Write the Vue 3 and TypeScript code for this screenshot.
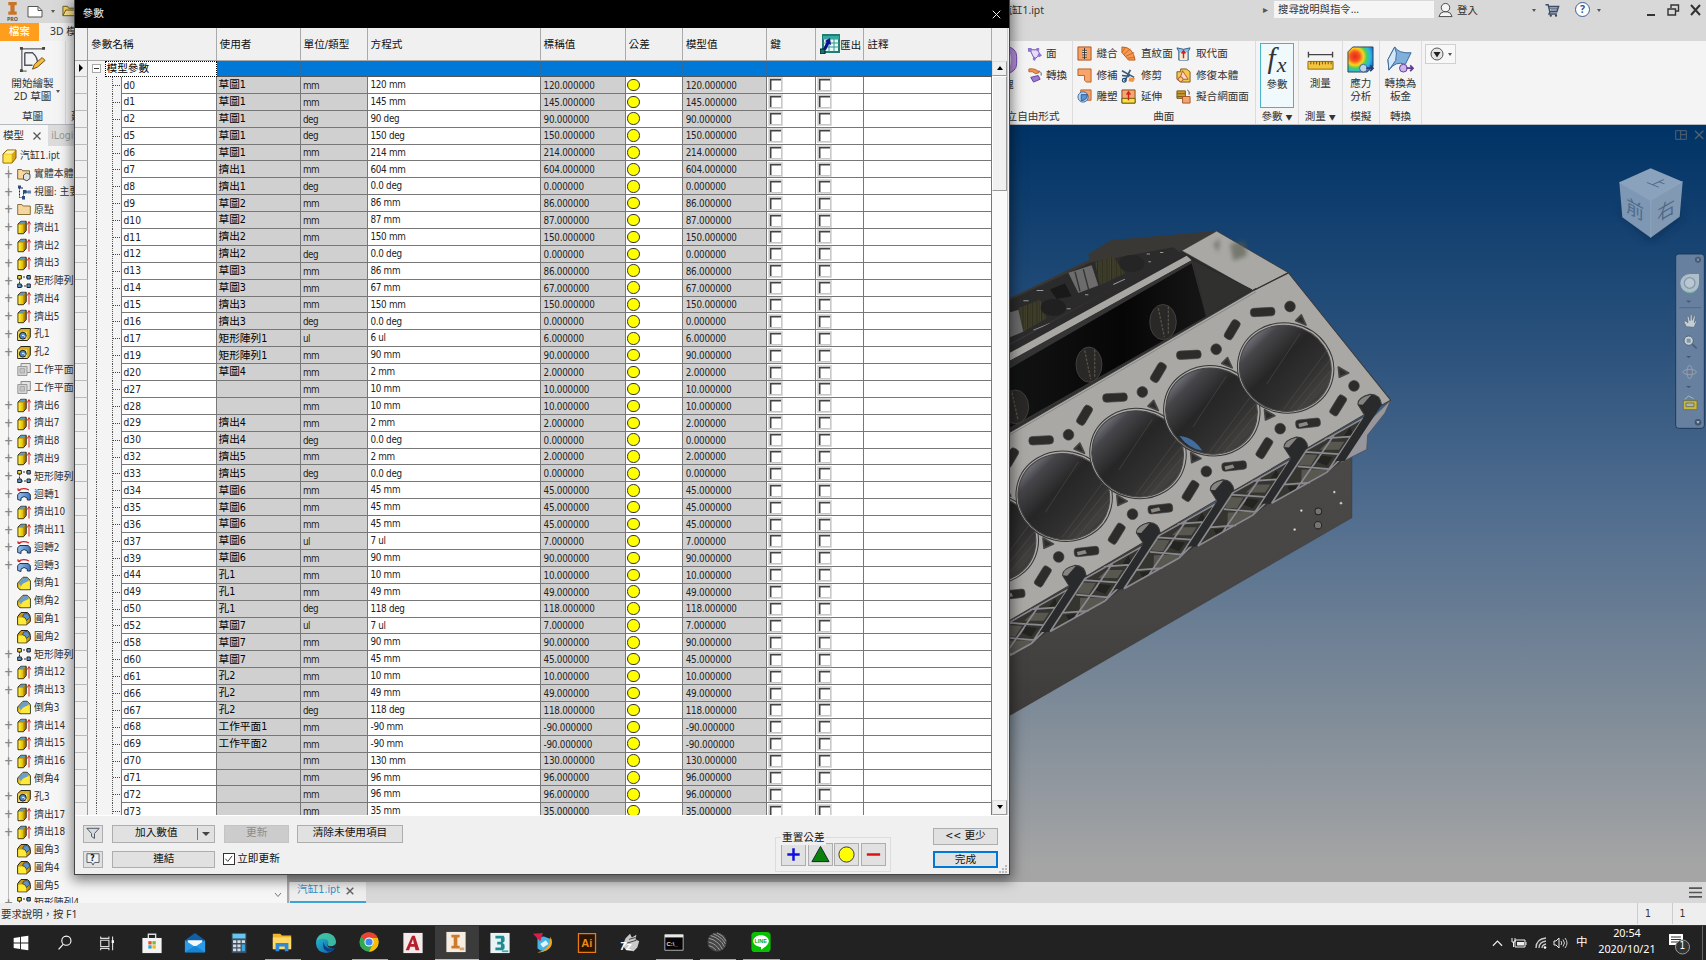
<script setup lang="ts">
interface Param { name: string; user: string; eq: string; unit: string; value: string }

const source = `d0|草圖1|120 mm
d1|草圖1|145 mm
d2|草圖1|90 deg
d5|草圖1|150 deg
d6|草圖1|214 mm
d7|擠出1|604 mm
d8|擠出1|0.0 deg
d9|草圖2|86 mm
d10|草圖2|87 mm
d11|擠出2|150 mm
d12|擠出2|0.0 deg
d13|草圖3|86 mm
d14|草圖3|67 mm
d15|擠出3|150 mm
d16|擠出3|0.0 deg
d17|矩形陣列1|6 ul
d19|矩形陣列1|90 mm
d20|草圖4|2 mm
d27||10 mm
d28||10 mm
d29|擠出4|2 mm
d30|擠出4|0.0 deg
d32|擠出5|2 mm
d33|擠出5|0.0 deg
d34|草圖6|45 mm
d35|草圖6|45 mm
d36|草圖6|45 mm
d37|草圖6|7 ul
d39|草圖6|90 mm
d44|孔1|10 mm
d49|孔1|49 mm
d50|孔1|118 deg
d52|草圖7|7 ul
d58|草圖7|90 mm
d60|草圖7|45 mm
d61|孔2|10 mm
d66|孔2|49 mm
d67|孔2|118 deg
d68|工作平面1|-90 mm
d69|工作平面2|-90 mm
d70||130 mm
d71||96 mm
d72||96 mm
d73||35 mm`

const params: Param[] = source.split('\n').map((line) => {
  const [name, user, eq] = line.split('|')
  const [num, unit] = eq.split(' ')
  return { name, user, eq, unit, value: Number(num).toFixed(6) }
})

const headers = ['參數名稱', '使用者', '單位/類型', '方程式', '標稱值', '公差', '模型值', '鍵', '匯出', '註釋']

interface Node { icon: string; label: string; plus: boolean }
const expandable = ['solid', 'view', 'folder', 'extrude', 'pattern', 'hole', 'revolve']
const nodes: Node[] = [
  'solid:實體本體(1)', 'view:視圖: 主要', 'folder:原點', 'extrude:擠出1', 'extrude:擠出2', 'extrude:擠出3',
  'pattern:矩形陣列1', 'extrude:擠出4', 'extrude:擠出5', 'hole:孔1', 'hole:孔2', 'plane:工作平面1', 'plane:工作平面2',
  'extrude:擠出6', 'extrude:擠出7', 'extrude:擠出8', 'extrude:擠出9', 'pattern:矩形陣列2', 'revolve:迴轉1',
  'extrude:擠出10', 'extrude:擠出11', 'revolve:迴轉2', 'revolve:迴轉3', 'chamfer:倒角1', 'chamfer:倒角2',
  'fillet:圓角1', 'fillet:圓角2', 'pattern:矩形陣列3', 'extrude:擠出12', 'extrude:擠出13', 'chamfer:倒角3',
  'extrude:擠出14', 'extrude:擠出15', 'extrude:擠出16', 'chamfer:倒角4', 'hole:孔3', 'extrude:擠出17',
  'extrude:擠出18', 'fillet:圓角3', 'fillet:圓角4', 'fillet:圓角5', 'pattern:矩形陣列4',
].map((s) => {
  const at = s.indexOf(':')
  const icon = s.slice(0, at)
  return { icon, label: s.slice(at + 1), plus: expandable.includes(icon) }
})

const surface = [
  [['stitch', '縫合'], ['ruled', '直紋面'], ['replace', '取代面']],
  [['patch', '修補'], ['trim', '修剪'], ['repair', '修復本體']],
  [['sculpt', '雕塑'], ['extend', '延伸'], ['mesh', '擬合網面面']],
]

const apps = [
  ['win', ''], ['search', ''], ['tasks', ''], ['store', ''], ['mail', ''], ['calc', ''], ['explorer', 'run'], ['edge', ''],
  ['chrome', 'run'], ['acad', ''], ['inventor', 'run active'], ['max', ''], ['bird', ''], ['ai', ''], ['zip', ''],
  ['cmd', 'run'], ['sphere', 'run'], ['line', 'run'],
]

const bays = [5, 4, 3, 2, 1, 0]
const shift = (k: number) => `translate(${-221.5 * k} ${126.5 * k})`
</script>

<template>
  <div class="app">
    <svg class="defs" width="0" height="0">
      <defs>
        <linearGradient id="gy" x1="0" x2="1"><stop offset="0" stop-color="#fff23a" /><stop offset="1" stop-color="#e0b400" /></linearGradient>
        <linearGradient id="gb" x1="0" x2="1"><stop offset="0" stop-color="#9cc0ee" /><stop offset="1" stop-color="#3f78bd" /></linearGradient>
        <linearGradient id="gedge" x1="0" y1="0" x2="1" y2="1"><stop offset="0" stop-color="#2bc3d2" /><stop offset="1" stop-color="#0b57ad" /></linearGradient>
        <radialGradient id="gstress" cx=".28" cy=".38" r=".85">
          <stop offset="0" stop-color="#e8281c" /><stop offset=".22" stop-color="#f5541e" /><stop offset=".4" stop-color="#ffd21e" />
          <stop offset=".55" stop-color="#4bd05a" /><stop offset=".72" stop-color="#27b8e8" /><stop offset="1" stop-color="#1d4fd0" />
        </radialGradient>
      </defs>
      <symbol id="solid" viewBox="0 0 14 14"><path d="M.7 11.500V2h4l1 1.300h6.800v8.200z" fill="#f7d9a0" stroke="#7b6236" /><path d="M6.500 7.500l3-2 3.500 1.500v4l-3 2.300-3.500-1.500z" fill="#dfe3e8" stroke="#555" /></symbol>
      <symbol id="view" viewBox="0 0 14 14"><path d="M2.500 2v10h3M4 2.500h3M6.500 7v4M9 6.500h5" stroke="#222" fill="none" stroke-dasharray="2 1" /><path d="M1 0h3v3H1zM6 4.500h3.500V8H6zM5 10.500h3V14H5z" fill="#2b4a80" /><path d="M10.500 5h3.500v3h-3.500z" fill="#5b83b8" /></symbol>
      <symbol id="folder" viewBox="0 0 14 14"><path d="M.7 12V2h4.200l1.200 1.500h7.200V12z" fill="#f4d79c" stroke="#8b6f3d" /></symbol>
      <symbol id="extrude" viewBox="0 0 14 14"><path d="M1 3.500L4 .8h5.200V10l-2.700 3.200H1z" fill="#a98400" stroke="#2a2613" /><path d="M1.500 4h5v8.700h-5z" fill="url(#gy)" /><path d="M1.600 3.300L4.200 1h4.300L6.600 3.300z" fill="#5b9bd5" /><path d="M12 13V2M10.300 4L12 1l1.700 3" stroke="#d32222" fill="none" /></symbol>
      <symbol id="pattern" viewBox="0 0 14 14"><path d="M3 2.500h8M2.500 4v7M4 11.500h7" stroke="#333" stroke-dasharray="2 1" fill="none" /><path d="M.7 1h3.600v3.500H.7z" fill="#f7e12f" stroke="#222" /><path d="M10 1h3.300v3.500H10zM.7 9.500h3.600V13H.7zM10 9.500h3.300V13H10z" fill="#5b9bd5" stroke="#222" /></symbol>
      <symbol id="hole" viewBox="0 0 14 14"><path d="M.7 4L4 1h9.300v8.500L10.500 13H.7z" fill="#d8b019" stroke="#2a2613" /><path d="M1.200 4.200h9v8.300h-9z" fill="#f6e36b" /><circle cx="5.800" cy="8.200" r="3.400" fill="#4f86c4" stroke="#222" /><path d="M5 8a2 2 0 0 1 3 2" stroke="#fff" fill="none" /></symbol>
      <symbol id="plane" viewBox="0 0 14 14"><path d="M4 1h9.300v9H4z" fill="#e4e4e4" stroke="#8a8a8a" /><path d="M.8 4H10v9H.8z" fill="#d4d4d4" stroke="#999" /><path d="M3 6h4.500v4.500H3z" fill="#c4c4c4" stroke="#aaa" /></symbol>
      <symbol id="revolve" viewBox="0 0 14 14"><path d="M1 3Q6-.5 12 2.500M1 3V.8M1 3h2.500" stroke="#d32222" fill="none" stroke-width="1.200" /><path d="M.7 7L3 5h8l2.300 2v5.500h-3V10.500Q7 7.500 4 10.500v2.500L.7 12z" fill="url(#gb)" stroke="#1d3452" /></symbol>
      <symbol id="chamfer" viewBox="0 0 14 14"><path d="M.7 6.500L6 .8h4L13.300 4v9.200H3L.7 11z" fill="#f2cc1a" stroke="#26301c" /><path d="M1.200 6.700L6.200 1.300h3.600L12 3.500 4.500 10z" fill="#6c9dcb" /><path d="M3.500 12.700q0-7 9.300-8v8z" fill="#ffe93b" /></symbol>
      <symbol id="fillet" viewBox="0 0 14 14"><path d="M.7 5L4 1h6.500Q13.300 3 13.300 6v4L9.500 13.300H.7z" fill="#c79b0b" stroke="#26231a" /><path d="M1.200 6H5q4 0 4 3.500V13H1.200z" fill="#ffec35" /><path d="M5.500 5Q6 1.500 10 2q2.600 1 2.700 4L9.500 9Q9 6 5.500 5z" fill="#5d93cc" stroke="#223" stroke-width=".6" /></symbol>

      <symbol id="stitch" viewBox="0 0 16 16"><path d="M1 1h14v14H1z" fill="#f6a266" stroke="#a8531d" /><path d="M6 3h4v10H6z" fill="#ffe3c8" /><path d="M8 2v12M5.500 4.500h5M5.500 7h5M5.500 9.500h5M5.500 12h5" stroke="#333" /></symbol>
      <symbol id="ruled" viewBox="0 0 16 16"><path d="M1 1q12 0 14 14H8L1 7z" fill="#f79a50" stroke="#b85a1c" /><path d="M1 7l4-6M3 9l7-6M5 11l9-4M7 13l8-1" stroke="#c96724" /></symbol>
      <symbol id="replace" viewBox="0 0 16 16"><path d="M1 2q7 3 14 0l-2 4v9H3V6z" fill="#8ec1ee" stroke="#28567f" /><path d="M4 7h8v8H4z" fill="#f8ead0" /><path d="M8 13V6M6 8l2-3 2 3" stroke="#d21f1f" stroke-width="1.500" fill="none" /></symbol>
      <symbol id="patch" viewBox="0 0 16 16"><path d="M1 1h14v14h-5L8 13V8H1z" fill="#f7a56a" stroke="#b86026" /></symbol>
      <symbol id="trim" viewBox="0 0 16 16"><path d="M1 3l13 7M4 14l6-12M1 8l8 1" stroke="#3d5c7a" stroke-width="1.800" /><path d="M9 10l6 1-2 4-5-1z" fill="#f29345" /><circle cx="3.500" cy="13" r="2" fill="none" stroke="#244a70" stroke-width="1.300" /></symbol>
      <symbol id="repair" viewBox="0 0 16 16"><path d="M1 4h4V1h6l4 3v11H5l-4-3z" fill="#f4c74f" stroke="#7b5617" /><path d="M4 12L7 3l6 9z" fill="#f9d9c2" stroke="#bd4f2c" /><circle cx="5" cy="12" r="2.500" fill="#ffcf53" stroke="#a55" /></symbol>
      <symbol id="sculpt" viewBox="0 0 16 16"><path d="M4 1h11v11H4z" fill="#f6a469" stroke="#b86026" /><circle cx="6.500" cy="8.500" r="5.500" fill="#b9d4f1" stroke="#3c6ea8" /><path d="M4.500 12.500V6h6.500q0 6-6.500 6.500z" fill="#5c93d2" stroke="#2b5c94" /></symbol>
      <symbol id="extend" viewBox="0 0 16 16"><path d="M1 1h14v14H1z" fill="#f4a76e" stroke="#8a4a1b" /><path d="M1 10h14v5H1z" fill="#fbe03a" stroke="#6c5a12" /><path d="M8 12V4M6 6l2-3 2 3" stroke="#d21f1f" stroke-width="1.500" fill="none" /></symbol>
      <symbol id="mesh" viewBox="0 0 16 16"><path d="M1 2h9v8H1z" fill="#c99a2c" stroke="#76581a" /><path d="M1 5h9M1 8h9" stroke="#7d5d1a" /><path d="M7 8h8v7H7z" fill="#f4a46d" stroke="#a4531f" /><path d="M12 1q3 1 2 5" stroke="#444" fill="none" /></symbol>

      <symbol id="win" viewBox="0 0 24 24"><path d="M4 6.500l7-1v6H4zM12 5.300l8-1.200v7.400h-8zM4 12.500h7v6l-7-1zM12 12.500h8v7.400l-8-1.200z" fill="#fff" /></symbol>
      <symbol id="search" viewBox="0 0 24 24"><circle cx="13.500" cy="9.500" r="5" stroke="#fff" fill="none" stroke-width="1.200" /><path d="M10 13.500L5 19" stroke="#fff" stroke-width="1.300" /></symbol>
      <symbol id="tasks" viewBox="0 0 24 24"><path d="M4 9h9v7H4zM4 5v2h9V5M4 20v-2h9v2" stroke="#ddd" fill="none" stroke-width="1.200" /><path d="M17 5v15" stroke="#ddd" stroke-width="1.200" /><path d="M16 9h2.500v3H16z" fill="#fff" /></symbol>
      <symbol id="store" viewBox="0 0 24 24"><path d="M8 7V2.500h8V7" fill="none" stroke="#ddd" stroke-width="1.500" /><path d="M1.500 6.500h21V23h-21z" fill="#f3f3f3" /><path d="M8 10h3.600v3.600H8z" fill="#e8502c" /><path d="M12.500 10h3.600v3.600h-3.600z" fill="#7eb927" /><path d="M8 14.500h3.600v3.600H8z" fill="#26a2e6" /><path d="M12.500 14.500h3.600v3.600h-3.600z" fill="#f7b719" /></symbol>
      <symbol id="mail" viewBox="0 0 24 24"><path d="M1 9L12 1l11 8v13H1z" fill="#0f5fa6" /><path d="M4 9h16v8H4z" fill="#f4f8fc" /><path d="M1 9l11 7 11-7v13H1z" fill="#2a9be8" /><path d="M1 22l11-7 11 7z" fill="#1484d4" /></symbol>
      <symbol id="calc" viewBox="0 0 24 24"><path d="M4 1h16v22H4z" fill="#3f4f62" /><path d="M5 2h14v5H5z" fill="#65c7ee" /><path d="M5.500 9h3.500v3H5.500zM10.200 9h3.500v3h-3.500zM5.500 13.500h3.500v3H5.500zM10.200 13.500h3.500v3h-3.500zM5.500 18h3.500v3H5.500zM10.200 18h3.500v3h-3.500zM15 9h3.500v3H15z" fill="#d5dce4" /><path d="M15 13.500h3.500V21H15z" fill="#3ea5df" /></symbol>
      <symbol id="explorer" viewBox="0 0 24 24"><path d="M2 3h8l2 2h10v14H2z" fill="#f2b52d" /><path d="M2 7h20v13H2z" fill="#ffd866" /><path d="M5 13h14v9h-4v-5H9v5H5z" fill="#2f8bd8" /></symbol>
      <symbol id="edge" viewBox="0 0 24 24"><circle cx="12" cy="12" r="11" fill="url(#gedge)" /><path d="M1.500 10Q4 1 13 1q9 1 10 9.500Q22 16 16 15.500q-3-.5-1.500-3Q15 8 10 7.500 4 7 1.500 10z" fill="#43c79a" opacity=".8" /><path d="M9.500 10.500Q7 19 14 21.500q5 0 8-4-4 1.500-8 0-4-2-4.500-7z" fill="#0c3f86" /><path d="M14.500 12.500q-1.500 2.500 1.500 3 5 .5 7-3l-.5 5q-4 1-7-.5-3-2-1-4.500z" fill="#222" /></symbol>
      <symbol id="chrome" viewBox="0 0 24 24"><circle cx="12" cy="12" r="10.500" fill="#34a853" /><path d="M12 12L3 6.500A10.500 10.500 0 0 1 21.500 7.500H12z" fill="#ea4335" /><path d="M21.500 7.500A10.500 10.500 0 0 1 12 22.500L16.500 14 14 7.500z" fill="#fbbc05" /><circle cx="12" cy="12" r="5" fill="#fff" /><circle cx="12" cy="12" r="3.900" fill="#4285f4" /></symbol>
      <symbol id="acad" viewBox="0 0 24 24"><path d="M1.500 1h21v22h-21z" fill="#f4eaea" /><path d="M4 20L11 4h3l5 16h-4.200l-1-4H9l-1.300 4zM10 13h3l-1-5z" fill="#b4202c" /></symbol>
      <symbol id="inventor" viewBox="0 0 24 24"><path d="M1.500 1h21v22h-21z" fill="#f7ece0" /><path d="M7 4h9v3h-2.500v9H16v3H7v-3h2.500V7H7z" fill="#cc7a2c" /><path d="M16 18h5v3h-5z" fill="#dfa56e" /></symbol>
      <symbol id="max" viewBox="0 0 24 24"><path d="M1.500 1h21v22h-21z" fill="#e9f3f3" /><path d="M7 4h9l1 2v4l-2 2 2 2v4l-2 2H7v-3h6v-3.500H9v-3h4V7H7z" fill="#1f8b92" /><path d="M14 20h7v2h-7z" fill="#4cacb0" /></symbol>
      <symbol id="bird" viewBox="0 0 24 24"><path d="M6 6l7-1 8 3q1 8-5 12-6 2-10-2z" fill="#42b5e6" /><path d="M1 2l11-1-3 9z" fill="#d4204a" /><path d="M6 22Q20 20 20 5q5 10-4 15-5 3-10 2z" fill="#f0a71f" /><path d="M9 13l6-4 3 4-6 4z" fill="#e4f2fa" /></symbol>
      <symbol id="ai" viewBox="0 0 24 24"><path d="M2.700 1.700h18.600v20.600H2.700z" fill="#2b1500" stroke="#e87a18" stroke-width="1.400" /></symbol>
      <symbol id="zip" viewBox="0 0 24 24"><path d="M7 7l5-5 2 4 5-3-1 5 4 2-2 7-4 4-8-1-4-5z" fill="#c9c9c9" /><path d="M11 8l7-2M9 12l10-3" stroke="#333" /></symbol>
      <symbol id="cmd" viewBox="0 0 24 24"><path d="M2 4h20v17H2z" fill="#050505" stroke="#b9b9b9" /><path d="M2 4h20v3H2z" fill="#e8e8e8" /></symbol>
      <symbol id="sphere" viewBox="0 0 24 24"><circle cx="12" cy="12" r="10.500" fill="#454545" /><path d="M3 8q10 2 15 12M5 5q11 3 15 12M8 3q10 4 13 11M3 12q8 2 12 9M3 16q5 1 8 5M12 2q7 3 10 9" stroke="#b0b0b0" fill="none" stroke-width=".9" /></symbol>
      <symbol id="line" viewBox="0 0 24 24"><rect x="1.500" y="1" width="21" height="22" rx="4" fill="#06c100" /><path d="M12 4.500c5 0 8.500 3 8.500 6.500 0 4-4.500 7-8.500 9.500v-3C7 17 3.500 14.500 3.500 11S7 4.500 12 4.500z" fill="#fff" /></symbol>
    </svg>

    <header class="titlebar">
      <div class="quick">
        <svg class="pro" viewBox="0 0 14 19"><path d="M3 1h8v3H9v6h2v3H3v-3h2V4H3z" fill="#c7752b" /><text x="7" y="19" text-anchor="middle" font-size="5" font-weight="bold" fill="#555">PRO</text></svg>
        <svg class="doc" viewBox="0 0 16 12"><path d="M1 1h10l4 4v6.500H1z" fill="#fff" stroke="#555" /><path d="M11 1v4h4" fill="none" stroke="#555" /></svg>
        <i class="car"></i>
        <svg class="fold" viewBox="0 0 16 12"><path d="M1 11V1h5l1 2h7v3" fill="#f5d25a" stroke="#6a5820" /><path d="M1 11l3-6h12l-3 6z" fill="#ffe68a" stroke="#6a5820" /></svg>
      </div>
      <div class="tabs"><b class="file">檔案</b><span>3D 模型</span></div>
      <span class="doc-title">汽缸1.ipt</span>
      <span class="search-car">▸</span>
      <div class="searchbox">搜尋說明與指令...</div>
      <svg class="person" viewBox="0 0 16 16"><circle cx="8" cy="5.500" r="4.500" fill="#f5f5f5" stroke="#444" /><path d="M1 15q1-4.500 5-5h4q4 .5 5 5z" fill="#f5f5f5" stroke="#444" /></svg>
      <span class="login">登入</span>
      <i class="car c2"></i>
      <svg class="cart" viewBox="0 0 16 16"><path d="M0 2h3l2 8h8l2-6H4M5 10l-1 2.500h9" fill="none" stroke="#3c4d6b" stroke-width="1.600" /><path d="M5 6h9M6 8h8" stroke="#3c4d6b" /><circle cx="6" cy="14.500" r="1.300" fill="#345" /><circle cx="12" cy="14.500" r="1.300" fill="#345" /></svg>
      <span class="help">?</span>
      <i class="car c3"></i>
      <svg class="wins" viewBox="0 0 60 16"><path d="M2 13h8" stroke="#333" stroke-width="2" /><path d="M23 7h7.500v6H23zM26 6V3h7.500v6H31" fill="none" stroke="#333" stroke-width="1.400" /><path d="M46 3l9 10M55 3l-9 10" stroke="#333" stroke-width="2" /></svg>
    </header>

    <section class="ribbon">
      <div class="panel sketch">
        <svg viewBox="0 0 28 28"><path d="M3 3h22M3 3v22" stroke="#333" stroke-width="1" /><path d="M1 1h3v3H1zM24 1h3v3h-3zM1 24h3v3H1z" fill="#444" /><path d="M6 7h8q6 5 5 12M6 7v13h8" stroke="#4e5661" stroke-width="1.500" fill="none" /><path d="M14 24l2-5 8-7 3 3-8 7z" fill="#f5bd3c" stroke="#6b4a1a" /><path d="M8 26H3" stroke="#444" /></svg>
        <span>開始繪製<br>2D 草圖</span><em>草圖</em><i class="car"></i>
      </div>
      <div class="panel create"><em>建立</em></div>
      <div class="panel freeform">
        <svg class="blob" viewBox="0 0 28 30"><rect x="1" y="1" width="26" height="28" rx="10" fill="#b891e0" stroke="#6c3fa8" /><path d="M16 2q8 12 0 26" fill="none" stroke="#f0e0ff" stroke-width="2" /></svg>
        <span class="chunk">塊</span>
        <div class="pair">
          <div><svg viewBox="0 0 16 16"><path d="M3 4l8 0 3 5-6 5z" fill="#e6dcf8" stroke="#6c50b0" /><path d="M1 2h4v4H1zM10 2h3v3h-3zM13 7l3 3-3 2-2-2zM7 11l3 2-2 3-2-2z" fill="#8d74cf" /></svg>面</div>
          <div><svg viewBox="0 0 16 16"><path d="M2 1q8-1 11 4l-4 1Q6 3 2 4z" fill="#f3924d" stroke="#b8602a" /><path d="M12 3q4 1 3 5" stroke="#555" fill="none" /><path d="M4 10l8-2 2 4-7 3z" fill="#9c7bd4" stroke="#5e3c98" /></svg>轉換</div>
        </div>
        <em>建立自由形式</em>
      </div>
      <div class="panel surf">
        <div class="grid3">
          <template v-for="(row, r) in surface" :key="r">
            <div v-for="c in row" :key="c[0]"><svg><use :href="'#' + c[0]" /></svg>{{ c[1] }}</div>
          </template>
        </div>
        <em>曲面</em>
      </div>
      <div class="panel fxp">
        <div class="fx"><div class="sym"><i>f</i><i class="sub">x</i></div><span>參數</span></div><em>參數 <small>▼</small></em>
      </div>
      <div class="panel meas">
        <svg viewBox="0 0 28 28"><path d="M1 9h26M1.500 6v6M26.500 6v6" stroke="#444" stroke-width="1.400" /><path d="M1 16h26v8H1z" fill="#f3c53a" stroke="#8c6a14" /><path d="M4 16v3M7 16v3M10 16v3M13 16v4M16 16v3M19 16v3M22 16v3M25 16v3" stroke="#6d4f0c" /></svg>
        <span>測量</span><em>測量 <small>▼</small></em>
      </div>
      <div class="panel stress">
        <svg viewBox="0 0 28 28"><path d="M1 6l5-5h21v20l-6 6H1z" fill="url(#gstress)" stroke="#345" /><circle cx="17" cy="23" r="4" fill="#bcd4ec" stroke="#3a6496" /><path d="M20 23h7M24 20l3 3-3 3" stroke="#223d70" stroke-width="1.800" fill="none" /></svg>
        <span>應力<br>分析</span><em>模擬</em>
      </div>
      <div class="panel conv">
        <svg viewBox="0 0 28 28"><path d="M8 1q4 7 17 6L19 19q-10-4-17 6L1 14z" fill="#7fb0dc" stroke="#386796" /><path d="M8 1q3 6 1 14L2 25 1 14z" fill="#d5e8f7" stroke="#386796" /><circle cx="17" cy="23" r="4" fill="#cdb6ea" stroke="#5c3b96" /><path d="M20 23h7M24 20l3 3-3 3" stroke="#5c3b96" stroke-width="1.800" fill="none" /></svg>
        <span>轉換為<br>板金</span><em>轉換</em>
      </div>
      <div class="more"><svg viewBox="0 0 14 14"><circle cx="7" cy="7" r="6" fill="#e7e7e7" stroke="#555" /><path d="M3.500 5h7L7 10.500z" fill="#222" /></svg><i class="car"></i></div>
    </section>

    <main class="work">
      <aside class="browser">
        <div class="btabs"><span>模型</span><svg viewBox="0 0 8 8"><path d="M.5.5l7 7M7.500.5l-7 7" stroke="#555" stroke-width="1.200" /></svg><b>iLogic</b></div>
        <div class="root"><svg viewBox="0 0 15 15"><path d="M1 5l4-4h9v8l-4 5H1z" fill="#d9a613" stroke="#8a5a0a" /><path d="M1.500 5.300h8.200v8.200H1.500z" fill="#ffe64a" /><path d="M2 4.700L5.300 1.500h8L10 4.700z" fill="#fff6b5" /></svg>汽缸1.ipt</div>
        <div class="tree">
          <div v-for="(n, i) in nodes" :key="i" class="node"><span class="pm">{{ n.plus ? '+' : '' }}</span><svg><use :href="'#' + n.icon" /></svg>{{ n.label }}</div>
        </div>
        <svg class="chev" viewBox="0 0 8 6"><path d="M1 1l3 3.500L7 1" stroke="#777" fill="none" /></svg>
      </aside>
      <div class="right">
        <div class="viewport">
          <svg class="scene" viewBox="287 124 1419 758">
            <defs>
              <linearGradient id="bore" x1="0" y1=".2" x2="1" y2=".8"><stop offset="0" stop-color="#8b8b97" /><stop offset=".17" stop-color="#47474b" /><stop offset=".42" stop-color="#262626" /><stop offset=".7" stop-color="#303030" /><stop offset=".88" stop-color="#43413e" /><stop offset="1" stop-color="#303030" /></linearGradient>
              <linearGradient id="block" x1="0" y1="0" x2="0" y2="1"><stop offset="0" stop-color="#4b4947" /><stop offset=".6" stop-color="#474543" /><stop offset="1" stop-color="#3d3c3b" /></linearGradient>
              <linearGradient id="valley" x1="0" x2="1"><stop offset="0" stop-color="#131414" /><stop offset=".6" stop-color="#060606" /><stop offset="1" stop-color="#161616" /></linearGradient>
              <filter id="soft"><feGaussianBlur stdDeviation="7" /></filter>
              <filter id="soft2"><feGaussianBlur stdDeviation="14" /></filter>
              <pattern id="rib" width="14" height="20" patternUnits="userSpaceOnUse"><path d="M0 0h14v20H0z" fill="#2b2c1b" /><path d="M3 0v20M9 0v20" stroke="#4b4a36" stroke-width="3" /></pattern>
            </defs>
            <g transform="translate(1000 200) scale(.33333 .338)">
              <path d="M1056 740V940L0 1542V1180z" fill="url(#block)" stroke="#33312f" />
              <path d="M-10 300L40 285 270 175 265 160 335 118 650 92 560 150-10 450z" fill="#3a3835" />
              <path d="M0 310L270 185 520 140 540 155 0 440z" fill="#2b2b2b" />
              <path d="M285 185l55-18 35 50-75 35z" fill="url(#rib)" /><path d="M205 215l70-22 20 60-60 22z" fill="#6c6c6c" /><path d="M225 212l15 58M250 205l16 60" stroke="#333" stroke-width="4" />
              <path d="M150 265l45-18 20 38-45 8z" fill="#191919" /><path d="M55 320l65-25 20 55-70 40z" fill="url(#rib)" /><path d="M20 335l35-10 15 65-50 20z" fill="#6c6c6c" />
              <ellipse cx="395" cy="188" rx="38" ry="25" fill="#252525" /><ellipse cx="160" cy="318" rx="38" ry="25" fill="#202020" />
              <path d="M70 298h16M110 268h20M440 160h10M480 155h10M445 183h8M200 322h12M255 280h10M340 250l35-16M100 385l50-20" stroke="#999" stroke-width="3" />
              <path d="M0 445L545 150 650 92 865 215 760 268 30 690H-10z" fill="#2b2b2b" />
              <path d="M545 150L650 92 865 215 758 268z" fill="#a9a8a5" stroke="#333" stroke-width="2" />
              <path d="M0 468L560 165 575 178 0 492z" fill="#a8a7a3" /><path d="M0 492L575 178 760 268 0 698z" fill="#343434" />
              <path d="M0 515L575 187 618 345 0 690z" fill="url(#valley)" />
              <path d="M578 178L756 265 618 345z" fill="#30302f" stroke="#202020" />
              <g fill="#292827" stroke="#504f4d" stroke-width="2"><ellipse cx="489" cy="361" rx="40" ry="52" /><ellipse cx="267" cy="487" rx="39" ry="52" /><ellipse cx="46" cy="612" rx="40" ry="50" /></g>
              <path d="M475 320l18 85M505 315v80M254 445l18 85M284 443v80M36 570l18 80" stroke="#555148" stroke-width="4" stroke-dasharray="8 4" fill="none" />
              <g filter="url(#soft)" opacity=".6"><path d="M640 130l20-15-5 40M690 130l45-10 5 45-40 15z" fill="#54594b" /></g>
              <path d="M1172 592L1155 630 1103 695 1100 738 1020 778 1060 700z" fill="#96969c" stroke="#4b4b50" stroke-width="2" />
              <g v-for="k in bays" :key="'s' + k" :transform="shift(k)">
                <path d="M1092 640L915 738 813 900 980 808 1030 770z" fill="#353530" />
                <path d="M985 715h48l-16 24h-58zM905 798l78-2-14 20-66 30zM912 752l40 2-20 32-36-2z" fill="#585750" />
                <path d="M1050 672l-18 26 30-2zM960 756l38 4-18 26-30-12zM862 848l40-4-30 22z" fill="#23231f" />
                <path d="M1090 646L920 740 815 897 980 806 1020 768M1088 648L980 806M1002 696L890 855M975 705L1050 700M915 745L1016 752M893 788L990 796M850 842L930 836M958 760L940 785" fill="none" stroke="#8b8990" stroke-width="5" />
                <path d="M1073 603Q1078 576 1112 574 1143 576 1145 606L1034 772 1006 772 1094 638z" fill="#292a2b" />
                <path d="M1073 604Q1080 580 1114 576L1088 606z" fill="#858480" />
              </g>
              <path d="M0 704L760 268 865 215 1172 592 1145 607Q1140 574 1110 575 1072 585 1074 605L1093 635 924 733Q919 700 889 701 851 711 852 732L872 762 702 860Q697 827 667 828 629 838 631 858L650 888 481 986Q476 953 446 954 408 964 409 985L429 1014 259 1113Q254 1080 224 1081 186 1091 188 1111L207 1141 0 1261z" fill="#a9a8a5" stroke="#3b3a3a" stroke-width="3" />
              <path d="M0 697L768 262M760 268L865 216" fill="none" stroke="#333" stroke-width="3" /><path d="M0 712L768 272" fill="none" stroke="#777" stroke-width="2" />
              <g v-for="k in bays" :key="k" :transform="shift(k)">
                <ellipse cx="857" cy="497" rx="145" ry="133" transform="rotate(12 857 497)" fill="#aaa9a7" stroke="#373737" stroke-width="3" />
                <ellipse cx="856" cy="498" rx="138" ry="127" transform="rotate(12 856 498)" fill="url(#bore)" stroke="#454545" stroke-width="3" />
                <path d="M850 620L985 440M870 620L990 475M892 622L993 505M800 545l100-150" stroke="#605d58" stroke-width="2.500" opacity=".5" />
                <g fill="#2d2c2b" stroke="#444" stroke-width="2">
                  <rect x="751" y="319" width="74" height="25" rx="11" transform="rotate(-3 788 331)" />
                  <rect x="666" y="370" width="62" height="27" rx="10" transform="rotate(-59 697 384)" />
                  <rect x="983" y="594" width="64" height="27" rx="8" transform="rotate(-58 1015 608)" />
                  <rect x="887" y="648" width="74" height="25" rx="9" transform="rotate(-6 924 660)" />
                  <circle cx="870" cy="315" r="16" /><circle cx="1062" cy="550" r="16" />
                  <path d="M887 357l17-17 14 30zM1015 494l31 18-28 12z" stroke-width="5" stroke-linejoin="round" />
                </g>
                <path d="M895 662l25-6 5 10-27 6z" fill="#8b8984" />
              </g>
              <path d="M538 698Q580 700 607 742 565 735 538 698z" fill="#426c9c" />
              <g fill="#deddd5" stroke="#333"><circle cx="1003" cy="864" r="4" /><circle cx="1023" cy="897" r="4" /><circle cx="904" cy="919" r="4" /><circle cx="884" cy="975" r="4" /></g>
              <g fill="#77746f" stroke="#252525" stroke-width="3"><circle cx="955" cy="921" r="10" /><circle cx="954" cy="962" r="11" /></g>
            </g>
            <g transform="translate(1560 110) scale(.33333)">
              <path d="M180 300l92 95 95-80-20-30z" fill="#0b2340" opacity=".5" filter="url(#soft2)" />
              <path d="M178 217L272 175 368 215 272 271z" fill="#8ba2bd" /><path d="M178 217L272 271V383L187 322z" fill="#7d97b5" /><path d="M272 271L368 215 359 320 272 383z" fill="#8299b4" />
              <path d="M178 217L272 271 368 215M272 271V383" fill="none" stroke="#a4b7cc" stroke-width="2" />
              <g fill="#516a88"><text font-size="46" transform="matrix(.85 .35 -.9 .42 259 217)">上</text><text font-size="56" transform="matrix(.95 .52 0 1 199 304)">前</text><text font-size="56" transform="matrix(.95 -.55 0 1 292 336)">右</text></g>
              <path d="M347 62h32v26h-32zM362 62v26M362 74h17" stroke="#53606f" stroke-width="3" fill="none" /><path d="M405 62l25 25M430 62l-25 25" stroke="#53606f" stroke-width="4" />
              <rect x="347" y="432" width="86" height="523" rx="9" fill="#67809f" stroke="#1b395d" stroke-width="3" />
              <circle cx="414" cy="449" r="9" fill="#40566f" /><path d="M410 445l8 8M418 445l-8 8" stroke="#bcc9d6" stroke-width="2" />
              <path d="M361 520a28 28 0 0 1 28-28h28v28a28 28 0 0 1-56 0z" fill="#aebfca" /><path d="M365 535q25 23 48 0-10 16-24 15t-24-15z" fill="#74b295" /><circle cx="389" cy="519" r="16" fill="#b9c8d2" stroke="#8799a9" stroke-width="4" />
              <path d="M378 572l8 6 8-6zM378 738l8 6 8-6zM378 828l8 6 8-6z" fill="#41566f" /><path d="M358 593h66" stroke="#415d7d" stroke-width="2" />
              <path d="M379 650l-8-16 7-1 6 6-3-21h5l4 14 1-19h5l1 18 5-15 4 2-3 20 4-7 3 3-8 18z" fill="#c5ced5" stroke="#56697e" stroke-width="2" />
              <circle cx="386" cy="692" r="14" fill="#c6d0d7" stroke="#4c5f75" stroke-width="3" /><path d="M380 686h12v12h-12z" fill="#8293a4" /><path d="M397 703l13 12" stroke="#4c5f75" stroke-width="5" />
              <ellipse cx="389" cy="786" rx="20" ry="8" fill="none" stroke="#8fa1b0" stroke-width="3" /><ellipse cx="389" cy="786" rx="8" ry="20" fill="none" stroke="#8fa1b0" stroke-width="3" /><path d="M389 780v12M383 786h12" stroke="#a9606d" stroke-width="3" />
              <path d="M370 872h41v27h-41z" fill="#c9ba3d" stroke="#5d6438" stroke-width="2" /><path d="M378 879h24v11h-24z" fill="#a9b6b0" stroke="#555" stroke-width="2" /><path d="M374 868l12-10 15 8" stroke="#a6b5c0" stroke-width="3" fill="none" />
              <circle cx="414" cy="937" r="10" fill="#40566f" /><path d="M409 934h10l-5 7z" fill="#bcc9d6" />
            </g>
          </svg>
        </div>
        <div class="doctabs"><span class="dtab">汽缸1.ipt<svg viewBox="0 0 8 8"><path d="M.7.7l6.600 6.600M7.300.7L.7 7.300" stroke="#666" stroke-width="1.500" /></svg></span><svg class="burger" viewBox="0 0 13 11"><path d="M0 1.200h13M0 5.500h13M0 9.800h13" stroke="#555" stroke-width="1.700" /></svg></div>
      </div>
    </main>

    <div class="status"><span>要求說明，按 F1</span><b>1</b><b>1</b></div>

    <footer class="taskbar">
      <div v-for="a in apps" :key="a[0]" class="slot" :class="a[1]">
        <svg><use :href="'#' + a[0]" /></svg>
        <span v-if="a[0] === 'ai'" class="over ai">Ai</span>
        <span v-if="a[0] === 'zip'" class="over zip">7z</span>
        <span v-if="a[0] === 'line'" class="over ln">LINE</span>
        <span v-if="a[0] === 'cmd'" class="over cm">C:\_</span>
      </div>
      <div class="tray">
        <svg class="up" viewBox="0 0 12 8"><path d="M1 7l5-5 5 5" stroke="#eee" fill="none" stroke-width="1.300" /></svg>
        <svg class="bat" viewBox="0 0 16 12"><path d="M4 3h10v7H4zM15 5v3" stroke="#eee" fill="none" /><path d="M6 5h7v3.500H6z" fill="#eee" /><path d="M1 1v4h3V1M2.500 5v5" stroke="#eee" fill="none" /></svg>
        <svg class="wifi" viewBox="0 0 12 12"><path d="M1 11Q1 2 11 1M4 11q0-6 7-7M7 11q0-3 4-4" stroke="#ccc" fill="none" stroke-width="1.300" /><circle cx="10" cy="10.500" r="1.300" fill="#fff" /></svg>
        <svg class="snd" viewBox="0 0 15 12"><path d="M1 4h2l3-3v10L3 8H1z" stroke="#eee" fill="none" /><path d="M8 4q1.500 2 0 4M10 2.500q3 3.500 0 7M12 1q4 5 0 10" stroke="#ccc" fill="none" /></svg>
        <span class="ime">中</span>
        <div class="clock"><span>20:54</span><span>2020/10/21</span></div>
        <div class="note"><svg viewBox="0 0 22 22"><path d="M1 1h14v11h-4l-3 3v-3H1z" fill="#fff" /><path d="M3 4h10M3 6.500h10M3 9h7" stroke="#333" /><circle cx="14.500" cy="14" r="7" fill="#333" stroke="#999" /></svg><i>1</i></div>
      </div>
    </footer>

    <div class="dialog">
      <div class="dtitle"><span>參數</span><svg viewBox="0 0 10 10"><path d="M.8.8l8.400 8.400M9.200.8L.8 9.200" stroke="#eee" stroke-width="1.100" /></svg></div>
      <div class="table">
        <div class="cols">
          <div class="row head"><div class="sel"></div>
            <div v-for="(h, i) in headers" :key="h" class="cell" :class="{ wide: i === 0, exp: i === 8 }">
              <svg v-if="i === 8" viewBox="0 0 20 20"><path d="M3 1h16v17H3z" fill="#e8f8f4" stroke="#1f7b74" stroke-width="2" /><path d="M3 5h16M3 9h16M3 13h16M9 3v15M14 3v15" stroke="#2f9a92" /><path d="M3 2h16v3H3z" fill="#39a99f" /><path d="M3 15L6.500 8 5 7l5-3 1 7-2-1-3 6z" fill="#10108c" /><path d="M0 15h5v5H0z" fill="#156f6a" stroke="#023" /></svg>{{ h }}
            </div>
          </div>
          <div class="row group"><div class="sel"><i class="arrow"></i></div><div class="gtree"><i class="box"></i></div><div class="gname">模型參數</div><div v-for="n in 9" :key="n" class="cell"></div></div>
          <div v-for="p in params" :key="p.name" class="row">
            <div class="sel"></div><div class="lines"><i></i></div>
            <div class="cell nm">{{ p.name }}</div><div class="cell g cj">{{ p.user }}</div><div class="cell g un">{{ p.unit }}</div>
            <div class="cell eq">{{ p.eq }}</div><div class="cell g">{{ p.value }}</div>
            <div class="cell tol"><i class="dot"></i></div><div class="cell g">{{ p.value }}</div>
            <div class="cell ck"><i></i></div><div class="cell ck"><i></i></div><div class="cell"></div>
          </div>
        </div>
        <div class="scroll"><div class="sb"><i></i></div><div class="thumb"></div><div class="track"></div><div class="sb down"><i></i></div></div>
      </div>
      <div class="foot">
        <div class="f1">
          <button class="ib"><svg viewBox="0 0 14 12"><path d="M.8.8h12.400L8.500 6v5L5.500 9V6z" fill="#d5dae2" stroke="#555c66" /></svg></button>
          <button class="w1 split"><span>加入數值</span><i></i></button>
          <button class="dis">更新</button><button class="clear">清除未使用項目</button>
          <button class="ib"><svg viewBox="0 0 15 14"><path d="M1 .8h13v9.400H9L7.500 13 6 10.200H1z" fill="#eef3f8" stroke="#555" /></svg><b>?</b></button>
          <button class="w1">連結</button>
          <label><i class="cb"><svg viewBox="0 0 10 10"><path d="M1.500 5l2.500 2.800L8.500 2" fill="none" stroke="#333" /></svg></i>立即更新</label>
        </div>
        <div class="reset"><span class="lg">重置公差</span>
          <button><svg viewBox="0 0 20 20"><path d="M10 3.500v13M3.500 10h13" stroke="#1010e0" stroke-width="2.600" /></svg></button>
          <button><svg viewBox="0 0 20 20"><path d="M10 1.500L19 17.500H1z" fill="#0a820a" stroke="#123" /></svg></button>
          <button><svg viewBox="0 0 20 20"><circle cx="10" cy="10" r="8" fill="#ff0" stroke="#333" /></svg></button>
          <button><svg viewBox="0 0 20 20"><path d="M3 10h14" stroke="#e01010" stroke-width="2.600" /></svg></button>
        </div>
        <div class="f2"><button>&lt;&lt; 更少</button><button class="ok">完成</button></div>
        <svg class="grip" viewBox="0 0 8 8"><path d="M6 0h2v2H6zM6 3h2v2H6zM6 6h2v2H6zM3 3h2v2H3zM3 6h2v2H3zM0 6h2v2H0z" fill="#bbb" /></svg>
      </div>
    </div>
  </div>
</template>

<style>
html, body { margin: 0; overflow: hidden; }
</style>

<style scoped>
.app { position: relative; width: 1706px; height: 960px; overflow: hidden; display: flex; flex-direction: column; background: #d8d8d8; font-family: "DejaVu Sans Condensed", "Noto Sans CJK TC", sans-serif; font-size: 10.67px; color: #333; line-height: 1.2; white-space: nowrap; }
.app * { box-sizing: border-box; }
.defs { position: absolute; }
svg { display: block; flex: none; }
em, i { font-style: normal; }
button { font: inherit; color: #111; padding: 0; margin: 0; background: #e1e1e1; border: 1px solid #adadad; display: flex; align-items: center; justify-content: center; }
.car { display: block; border: 2.500px solid transparent; border-top: 3px solid #555; border-bottom: 0; flex: none; }

.titlebar { height: 41px; flex: none; display: flex; align-items: flex-start; background: #d8d8d8; font-family: "Noto Sans", "Noto Sans CJK TC", sans-serif; font-size: 10.4px; position: relative; }
.quick { width: 72px; height: 22px; display: flex; align-items: center; padding-left: 5px; flex: none; }
.pro { width: 15px; height: 20px; margin-right: 7px; }
.doc { width: 16px; height: 13px; margin-right: 8px; }
.fold { width: 15px; height: 12px; margin-left: 7px; }
.tabs { position: absolute; left: 0; top: 23px; height: 18px; width: 90px; display: flex; line-height: 17px; background: #f0f0f0; }
.file { width: 39px; background: #ff9d1c; color: #fff; text-align: center; margin-right: 11px; font-weight: 500; }
.doc-title { width: 46px; margin: 4px 0 0 926px; text-align: right; }
.search-car { margin: 3px 0 0 219px; width: 8px; color: #555; }
.searchbox { margin: 1px 4px 0 3px; width: 160px; height: 17px; line-height: 16px; padding-left: 4px; background: #f5f5f5; flex: none; }
.person { width: 15px; height: 16px; margin-top: 2px; }
.login { margin: 4px 0 0 4px; width: 21px; }
.c2 { margin: 9px 0 0 54px; }
.cart { width: 15px; height: 14px; margin: 3px 0 0 9px; }
.help { width: 15px; height: 15px; border: 1.500px solid #3a5f96; border-radius: 50%; background: #fff; color: #2759a0; font-weight: bold; text-align: center; line-height: 12px; margin: 2px 0 0 15px; flex: none; }
.c3 { margin: 9px 0 0 7px; }
.wins { width: 60px; height: 16px; margin: 2px 0 0 44px; }

.ribbon { height: 84px; flex: none; display: flex; background: #f4f4f4; border-bottom: 1px solid #b5bac0; font-family: "Noto Sans", "Noto Sans CJK TC", sans-serif; font-size: 10.6px; line-height: 13px; }
.panel { position: relative; border-right: 1px solid #dcdcdc; display: flex; flex-direction: column; align-items: center; flex: none; text-align: center; }
.panel em { margin-top: auto; height: 14.500px; line-height: 13px; }
.panel small { font-size: 7px; }
.panel > svg { width: 27px; height: 27px; margin: 5px 0 4px; }
.sketch { width: 66px; }
.sketch .car { position: absolute; left: 56px; top: 49px; }
.create { width: 784px; align-items: flex-start; padding-left: 5px; }
.freeform { width: 222.500px; }
.freeform .blob { position: absolute; left: 141px; top: 0; height: 28px; }
.chunk { position: absolute; left: 153px; top: 37px; }
.pair { position: absolute; left: 178px; top: 2px; text-align: left; }
.pair div, .grid3 div { display: flex; align-items: center; height: 21.500px; gap: 4px; }
.pair svg, .grid3 svg { width: 15px; height: 15px; }
.pair svg { margin-left: -1px; }
.freeform em { margin-left: 134px; }
.surf { width: 183.500px; }
.grid3 { display: grid; grid-template-columns: 44.500px 55px 79px; padding: 2px 0 0 4px; width: 100%; }
.grid3 div { gap: 5px; }
.fxp { width: 43px; }
.fx { width: 34px; height: 65px; margin-top: 2px; border: 1px solid #48b3c8; background: #f0fafc; display: flex; flex-direction: column; align-items: center; }
.sym { display: flex; height: 33px; margin-bottom: 1px; font: italic 29px/29px "Liberation Serif", serif; color: #333; }
.sym i { font-style: italic; }
.sym .sub { font-size: 22px; line-height: 20px; height: 20px; margin: 11px 0 0 1px; }
.meas { width: 43.500px; }
.stress { width: 37.500px; }
.conv { width: 42px; }
.more { margin: 3px 0 0 3px; width: 31px; height: 20px; border: 1px solid #d0d0d0; display: flex; align-items: center; justify-content: center; gap: 4px; background: #f8f8f8; }
.more svg { width: 14px; height: 14px; }

.work { height: 778px; flex: none; display: flex; }
.browser { width: 287px; background: #f6f6f6; overflow: hidden; position: relative; font-size: 9.9px; flex: none; font-family: "DejaVu Sans Condensed", "Noto Sans CJK TC", sans-serif; }
.btabs { height: 21px; display: flex; align-items: center; background: #f6f6f6; padding-left: 3px; font-size: 10.6px; }
.btabs svg { width: 8px; height: 8px; margin: 0 7px 0 9px; }
.btabs b { font-weight: 400; background: #dcdcdc; color: #999; width: 60px; height: 21px; line-height: 20px; padding-left: 3px; }
.root { height: 19.500px; display: flex; align-items: center; padding: 1px 0 0 2px; gap: 3px; }
.root svg { width: 15px; height: 15px; }
.tree { background: linear-gradient(#bbb, #bbb) 8px 0 / 1px 100% no-repeat; }
.node { height: 17.790px; display: flex; align-items: center; }
.node svg { width: 14px; height: 15px; margin-right: 3px; }
.pm { width: 17px; height: 15px; text-align: center; line-height: 14px; font-size: 12px; font-weight: bold; color: #888; }
.chev { position: absolute; left: 274px; top: 767px; width: 8px; height: 6px; }
.right { flex: 1; display: flex; flex-direction: column; border-left: 2px solid #aaa; }
.viewport { height: 757px; background: linear-gradient(#003366, #274f7a 27%, #4f6c8e 50%, #7e8b98 77%, #a5a5a5 98%); overflow: hidden; }
.scene { width: 1419px; height: 758px; margin: -1px 0 0 -2px; font-family: "Noto Sans CJK TC", sans-serif; }
.doctabs { flex: 1; background: #d8d8d8; display: flex; justify-content: space-between; align-items: flex-start; padding: 0 4px 0 1px; }
.dtab { width: 75.500px; height: 21px; background: #eee; border-bottom: 2px solid #3ba4d4; color: #2f94cc; font-size: 10.67px; display: flex; align-items: center; padding: 0 0 2px 7px; gap: 6px; }
.dtab svg { width: 8px; height: 8px; }
.burger { width: 13px; height: 11px; margin-top: 5px; }

.status { height: 21.500px; flex: none; background: #eeeeee; display: flex; align-items: center; font-size: 10.4px; }
.status span { flex: 1; padding-left: 1px; font-family: "Noto Sans", "Noto Sans CJK TC", sans-serif; }
.status b { font-weight: 400; width: 34.500px; border-left: 1px solid #ccc; padding-left: 7px; height: 21px; line-height: 21px; }

.taskbar { height: 36px; flex: none; background: #222; display: flex; border-top: 1px solid #333; }
.slot { width: 43.500px; height: 35px; display: flex; align-items: center; justify-content: center; position: relative; flex: none; padding: 0 1px 1px 0; }
.slot svg { width: 22px; height: 22px; }
.slot.run { border: solid #9b9b9b; border-width: 0 0 2px; padding-top: 1px; border-image: linear-gradient(90deg, transparent 10%, #aaa 10%, #aaa 90%, transparent 90%) 1; }
.slot.active { background: #3b3b3b; border-image: none; border-color: #bbb; }
.over { position: absolute; font: bold 11px/12px "Liberation Sans", sans-serif; color: #ee8a20; }
.zip { color: #fff; left: 11px; top: 14px; font-style: italic; }
.ln { font-size: 5.500px; color: #06a900; top: 9.500px; }
.cm { color: #ddd; font-size: 6px; top: 12px; left: 14px; }
.tray { margin-left: auto; display: flex; align-items: center; border-right: 1px solid #666; margin-right: 3px; height: 35px; color: #fff; }
.up { width: 11px; height: 8px; margin-right: 8px; }
.bat { width: 16px; height: 12px; margin-right: 8px; }
.wifi { width: 12px; height: 12px; margin-right: 6px; }
.snd { width: 15px; height: 12px; margin-right: 8px; }
.ime { font-size: 11.500px; width: 12px; }
.clock { width: 70px; display: flex; flex-direction: column; text-align: center; font: 10.800px/15.800px "Noto Sans", sans-serif; margin: -4px -2px 0 4px; }
.note { width: 22px; height: 24px; margin: 3px 12px 0 8px; position: relative; }
.note svg { width: 22px; height: 22px; }
.note i { position: absolute; left: 11.500px; top: 7px; font-size: 10px; }

.dialog { position: absolute; left: 74px; top: 0; width: 936px; height: 875px; background: #f0f0f0; border: 1px solid #444; border-width: 0 1px 1px; box-shadow: 0 3px 12px 2px rgba(0, 0, 0, .5); color: #111; font-size: 10.67px; }
.dtitle { height: 28px; background: #000; color: #eee; display: flex; align-items: center; justify-content: space-between; padding: 0 8.500px 0 7.500px; }
.dtitle svg { width: 9px; height: 9px; }
.table { display: flex; height: 787.500px; overflow: hidden; border-bottom: 1px solid #fff; }
.cols { width: 917px; flex: none; }
.row { display: grid; grid-template-columns: 13px 32.500px 96px 84px 67px 173px 85px 57.200px 84.600px 49px 48px 127.700px; height: 16.900px; background: #fff; font-size: 9.8px; letter-spacing: -.22px; color: #222; }
.cell { border-right: 1px solid #777; border-bottom: 1px solid #777; display: flex; align-items: center; padding: 1.500px 0 0 3px; overflow: hidden; min-width: 0; }
.cell.g { background: #d0d0d0; }
.cell.nm { padding-left: 2px; letter-spacing: 0; border-left: 1px solid #777; font-size: 10.2px; }
.cell.cj { font-size: 10.67px; padding-left: 2px; letter-spacing: 0; color: #000; }
.cell.un { letter-spacing: -.5px; padding-left: 2.500px; }
.cell.eq { padding-top: 0; letter-spacing: -.3px; }
.sel { background: #f0f0f0; border-right: 1px solid #999; border-bottom: 1px solid #bbb; display: flex; align-items: center; }
.lines { background: #f4f4f4; position: relative; display: flex; align-items: center; background-image: repeating-linear-gradient(#555 0 1px, transparent 1px 2px), repeating-linear-gradient(#555 0 1px, transparent 1px 2px); background-size: 1px 100%, 1px 100%; background-position: 8px 0, 24px 0; background-repeat: no-repeat; }
.lines i { margin-left: 25px; width: 7px; border-top: 1px dotted #444; }
.head { height: 32.500px; background: #f0f0f0; font-size: 10.67px; letter-spacing: 0; color: #111; }
.head .cell { border-right-color: #aaa; border-bottom: 1px solid #aaa; padding-top: 4px; }
.head .sel { border-bottom-color: #aaa; }
.head .wide { grid-column: span 2; }
.head .exp { padding-left: 4px; padding-top: 3px; font-size: 10.4px; }
.head .exp svg { width: 20px; height: 20px; margin-top: -3px; }
.group { height: 16.500px; background: #0078d7; }
.group .cell { border-right-color: #2a6ca3; border-bottom-color: #555; }
.gtree { background: #f4f4f4; grid-column: 2; width: 16.500px; display: flex; align-items: center; }
.box { width: 9px; height: 9px; margin-left: 4px; border: 1px solid #aaa; background: linear-gradient(#333, #333) center / 5px 1px no-repeat #fff; }
.gname { margin-left: -16px; border: 1px dotted #000; background: #fff; font-size: 10.67px; letter-spacing: 0; padding-left: 1px; line-height: 14px; color: #000; }
.arrow { margin-left: 4px; border: 4px solid transparent; border-left: 4.500px solid #000; border-right: 0; }
.cell.tol { padding: 0 0 0 1.500px; }
.dot { width: 12.500px; height: 12.500px; border: 1px solid #333; border-radius: 50%; background: #ff0; flex: none; }
.cell.ck { padding: 0 0 0 2px; }
.ck i { width: 13px; height: 13px; flex: none; border: 1px solid #c8c8c8; box-shadow: inset 1.500px 1.500px 0 #444; background: #fff; outline: 1px solid #ddd; }
.scroll { width: 16px; display: flex; flex-direction: column; padding-top: 32.500px; background: #f0f0f0; flex: none; border-right: 1px solid #ccc; }
.sb { height: 15px; border: 1px solid #ddd; border-right-color: #999; border-bottom-color: #999; flex: none; display: flex; align-items: center; justify-content: center; }
.sb i { border: 3.500px solid transparent; border-top: 0; border-bottom: 4px solid #000; }
.sb.down i { border-top: 4px solid #000; border-bottom: 0; }
.thumb { height: 115px; border: 1px solid #fff; border-right-color: #999; border-bottom-color: #999; flex: none; }
.track { flex: 1; background: #fafafa; }
.foot { height: 58px; display: flex; position: relative; }
.f1 { display: grid; grid-template-columns: 20px 104px 65px 106px; row-gap: 8px; grid-template-rows: 17.500px 17px; margin: 9.500px 0 0 7.500px; width: 321.500px; justify-content: space-between; flex: none; }
.ib { width: 20px; position: relative; }
.ib svg { width: 14px; height: 13px; }
.ib b { position: absolute; font-size: 8.500px; top: 1px; }
.w1 { margin-left: 1px; }
.split { position: relative; }
.split span { flex: 1; padding-left: 2px; }
.split i { width: 17px; height: 12px; border-left: 1px solid #777; display: flex; align-items: center; justify-content: center; }
.split i::after { content: ""; border: 4px solid transparent; border-top-color: #444; border-bottom: 0; }
.dis { background: #ccc; border-color: #c4c4c4; color: #8c8c8c; }
.clear { margin-left: -1px; margin-right: 1px; }
label { display: flex; align-items: center; gap: 2.500px; margin-left: -1px; }
.cb { width: 11.500px; height: 11.500px; border: 1px solid #333; background: #fff; flex: none; }
.cb svg { width: 9.500px; height: 9.500px; }
.reset { position: absolute; left: 700px; top: 21.500px; width: 115.500px; height: 35px; border: 1px solid #dcdcdc; display: flex; gap: 1.600px; padding: 5px 0 0 5px; }
.reset button { width: 25px; height: 23px; }
.reset svg { width: 19px; height: 19px; }
.lg { position: absolute; left: 5px; top: -7px; line-height: 14px; padding: 0 1px; background: #f0f0f0; }
.f2 { position: absolute; left: 858px; top: 12px; width: 65px; display: flex; flex-direction: column; gap: 6.500px; }
.f2 button { height: 17px; padding-top: 1px; }
.f2 .ok { border: 2px solid #0078d7; }
.grip { position: absolute; right: 2px; bottom: 1px; width: 8px; height: 8px; }
</style>
